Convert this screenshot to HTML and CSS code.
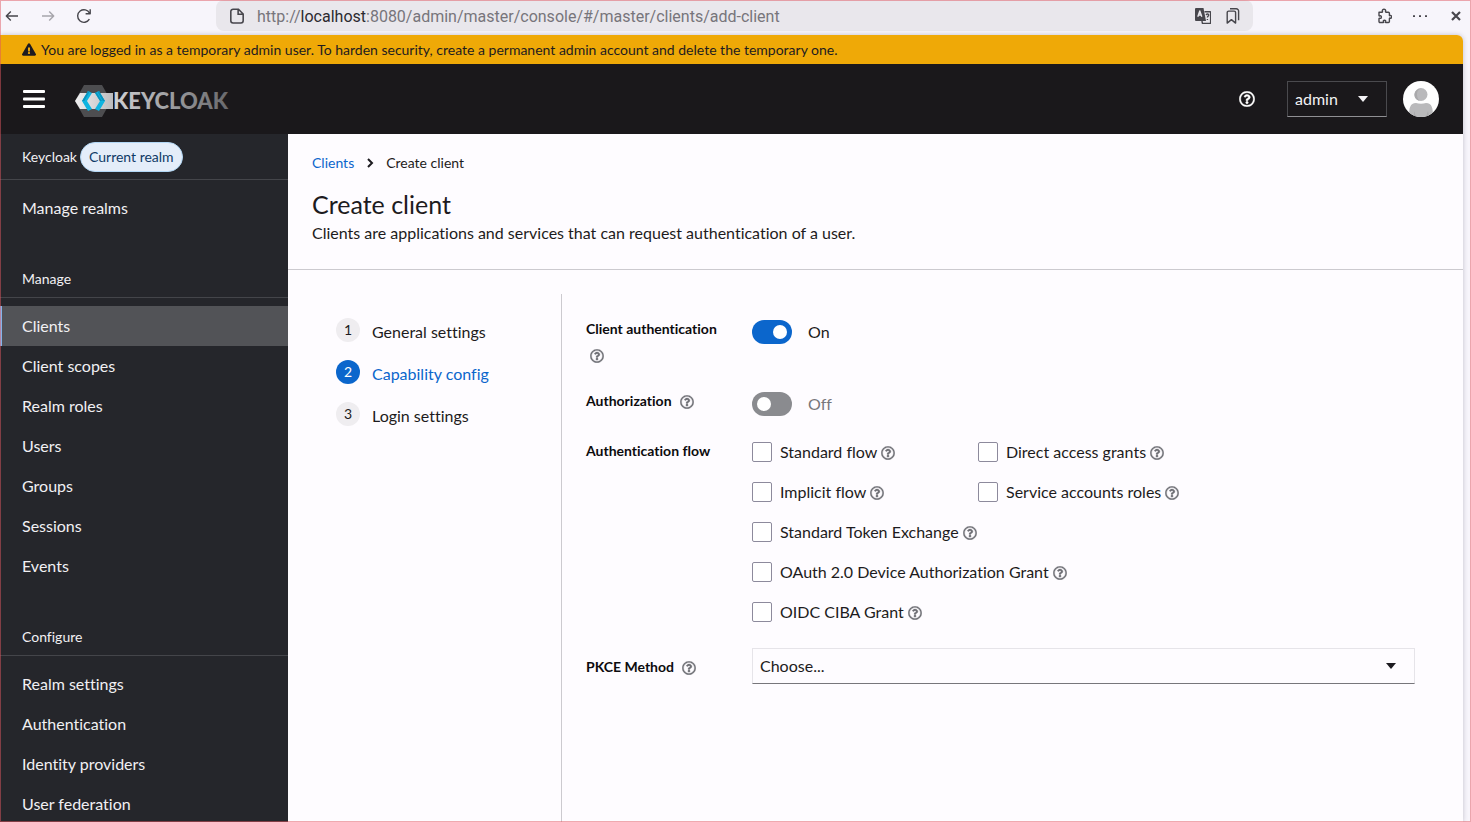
FILE: index.html
```html
<!DOCTYPE html>
<html lang="en">
<head>
<meta charset="utf-8">
<title>Create client - Keycloak Administration Console</title>
<link rel="stylesheet" href="styles.css">
</head>
<body>
<svg class="sprite" aria-hidden="true">
  <symbol id="help" viewBox="0 0 512 512"><path d="M256 8C119.043 8 8 119.083 8 256c0 136.997 111.043 248 248 248s248-111.003 248-248C504 119.083 392.957 8 256 8zm0 448c-110.532 0-200-89.431-200-200 0-110.495 89.472-200 200-200 110.491 0 200 89.471 200 200 0 110.53-89.431 200-200 200zm107.244-255.2c0 67.052-72.421 68.084-72.421 92.863V300c0 6.627-5.373 12-12 12h-45.647c-6.627 0-12-5.373-12-12v-8.659c0-35.745 27.1-50.034 47.579-61.516 17.561-9.845 28.324-16.541 28.324-29.579 0-17.246-21.999-28.693-39.784-28.693-23.189 0-33.894 10.977-48.942 29.969-4.057 5.12-11.46 6.071-16.666 2.124l-27.824-21.098c-5.107-3.872-6.251-11.066-2.644-16.363C184.846 131.491 214.94 112 261.794 112c49.071 0 101.45 38.304 101.45 88.8zM298 368c0 23.159-18.841 42-42 42s-42-18.841-42-42 18.841-42 42-42 42 18.841 42 42z"/></symbol>
</svg>

<div class="window">
  <div class="toolbar">
    <div class="history">
      <button class="tool" aria-label="Back"><svg viewBox="0 0 16 16"><path d="M14 8H2.500M6.800 3.500 2.300 8l4.500 4.500"/></svg></button>
      <button class="tool" aria-label="Forward" disabled><svg viewBox="0 0 16 16"><path d="M2 8h11.500M9.200 3.500l4.500 4.500-4.500 4.500"/></svg></button>
      <button class="tool" aria-label="Reload"><svg viewBox="0 0 16 16"><path d="M13.400 11.200A6.300 6.300 0 1 1 13.600 5.200M14.200 1.200v4.500H9.600"/></svg></button>
    </div>
    <div class="address">
      <svg class="address-icon" viewBox="0 0 16 16"><path d="M4.500 2h4.800l4.200 4.200v6a2 2 0 0 1-2 2h-7a2 2 0 0 1-2-2V4a2 2 0 0 1 2-2zM9 2.200v4.300h4.400"/></svg>
      <div class="url">http://<b>localhost</b>:8080/admin/master/console/#/master/clients/add-client</div>
      <button class="tool" aria-label="Translate page"><svg viewBox="0 0 16 16"><path class="solid" d="M1 0h7.500l2.500 13H1a1 1 0 0 1-1-1V1a1 1 0 0 1 1-1z"/><path class="cut" d="M2.800 8.800 4.800 3l2 5.800M3.500 7h2.600"/><path d="M9.500 3.700H15a.6.6 0 0 1 .6.6v10.600a.6.6 0 0 1-.6.6H7.500l-.6-2.500M11.200 7.200c.2-1.800 2.600-1.500 2.400 0-.1 1-1.200 1-1.200 2.200M12.400 11v1"/></svg></button>
      <button class="tool" aria-label="Bookmark this page"><svg viewBox="0 0 16 16"><path d="M2.200 4.500a1.400 1.400 0 0 1 1.400-1.400h5.600a1.400 1.400 0 0 1 1.400 1.400v10.600L6.400 11.600l-4.200 3.500zM5 .8h6.300a2.300 2.300 0 0 1 2.300 2.300v9.200"/></svg></button>
    </div>
    <div class="actions">
      <button class="tool" aria-label="Extensions"><svg viewBox="0 0 16 16"><path d="M3 4.200h3c.5 0 .6-.4.400-.9C5.700.5 10.300.5 9.600 3.300c-.2.5 0 .9.500.9h2.300a1 1 0 0 1 1 1v2c0 .5.4.6.7.3 1.900-.9 1.900 3.500 0 2.600-.3-.2-.7 0-.7.4v3a1 1 0 0 1-1 1H9.800c-.5 0-.5-.4-.3-.8.900-2-2.900-2-2-.1.200.500.200.9-.3.9H4a1 1 0 0 1-1-1v-2.800c0-.6.500-.6.900-.4 2 .8 2-3.200 0-2.400-.4.200-.9.100-.9-.4z"/></svg></button>
      <button class="tool" aria-label="Menu"><svg viewBox="0 0 16 16"><path class="solid" d="M1 7.300h2v1.800H1zM7 7.300h2v1.800H7zM13 7.300h2v1.800h-2z"/></svg></button>
      <button class="tool tool-close" aria-label="Close"><svg viewBox="0 0 16 16"><path d="m4 4 8 8M12 4l-8 8"/></svg></button>
    </div>
  </div>

  <div class="page">
    <div class="banner">
      <svg viewBox="0 0 576 512" aria-hidden="true"><path d="M569.517 440.013C587.975 472.007 564.806 512 527.94 512H48.054c-36.937 0-59.999-40.055-41.577-71.987L246.423 23.985c18.467-32.009 64.72-31.951 83.154 0l239.94 416.028zM288 354c-25.405 0-46 20.595-46 46s20.595 46 46 46 46-20.595 46-46-20.595-46-46-46zm-43.673-165.346l7.418 136c.347 6.364 5.609 11.346 11.982 11.346h48.546c6.373 0 11.635-4.982 11.982-11.346l7.418-136c.375-6.874-5.098-12.654-11.982-12.654h-63.383c-6.884 0-12.356 5.78-11.981 12.654z"/></svg>
      <span>You are logged in as a temporary admin user. To harden security, create a permanent admin account and delete the temporary one.</span>
    </div>

    <header class="masthead">
      <button class="burger" aria-label="Global navigation"><svg viewBox="0 0 22 20"><rect y="1" width="22" height="3" rx="1"/><rect y="8.500" width="22" height="3" rx="1"/><rect y="16" width="22" height="3" rx="1"/></svg></button>
      <a class="brand" href="#" aria-label="Keycloak">
        <svg viewBox="0 0 153 32">
          <defs>
            <linearGradient id="band" x1="0" x2="1"><stop offset="0" stop-color="#efeff0"/><stop offset="1" stop-color="#bcbcbe"/></linearGradient>
            <linearGradient id="word" gradientUnits="userSpaceOnUse" x1="38" x2="153" y1="0" y2="0"><stop offset="0" stop-color="#d2d2d4"/><stop offset="1" stop-color="#69696c"/></linearGradient>
          </defs>
          <path fill="#4d4d50" d="M9 0h18l9 16-9 16H9L0 16z"/>
          <path fill="url(#band)" d="M5 8h33v16H5L0 16z"/>
          <path fill="#0fb4e0" d="m13 6 4 2-5 8 5 8-4 2-6-10z"/>
          <path fill="#0a93bd" d="m13 6 1.500.7L9.300 16H7z"/>
          <path fill="#0fb4e0" d="m24 6 6 10-6 10-4-2 5-8-5-8z"/>
          <path fill="#0a93bd" d="m24 6 6 10h-2.200l-5.400-9.200zM25 16l-5-8 1.500-.700L27 16z"/>
          <text class="wordmark" x="38" y="24" fill="url(#word)">KEYCLOAK</text>
        </svg>
      </a>
      <div class="masthead-tools">
        <button class="help-button" aria-label="Help"><svg><use href="#help"/></svg></button>
        <button class="user-menu">admin <span class="caret"></span></button>
        <svg class="avatar" viewBox="0 0 36 36" role="img" aria-label="Avatar">
          <clipPath id="round"><circle cx="18" cy="18" r="18"/></clipPath>
          <g clip-path="url(#round)">
            <path fill="#fefefe" d="M0 0h36v36H0z"/>
            <circle cx="18" cy="13.500" r="6.500" fill="#b9b9bb"/>
            <path fill="#a9a9ab" d="M18 7.500c-3 1-4 3-4 6s1 5 3 6.300c-8-1-7-12 1-12.300z"/>
            <path fill="#b9b9bb" d="M6 36c0-9 1-14 7-14 3 1 7 1 10 0 6 0 7 5 7 14z"/>
            <path fill="#a9a9ab" d="M11 30l2 6h-2zM25 30l-2 6h3z"/>
          </g>
        </svg>
      </div>
    </header>

    <div class="shell">
      <nav class="sidebar" aria-label="Global">
        <div class="realm"><span>Keycloak</span><span class="realm-badge">Current realm</span></div>
        <ul><li><a href="#">Manage realms</a></li></ul>
        <h2>Manage</h2>
        <ul>
          <li><a class="current" href="#" aria-current="page">Clients</a></li>
          <li><a href="#">Client scopes</a></li>
          <li><a href="#">Realm roles</a></li>
          <li><a href="#">Users</a></li>
          <li><a href="#">Groups</a></li>
          <li><a href="#">Sessions</a></li>
          <li><a href="#">Events</a></li>
        </ul>
        <h2>Configure</h2>
        <ul>
          <li><a href="#">Realm settings</a></li>
          <li><a href="#">Authentication</a></li>
          <li><a href="#">Identity providers</a></li>
          <li><a href="#">User federation</a></li>
        </ul>
      </nav>

      <main class="main">
        <div class="intro">
          <nav class="crumbs" aria-label="Breadcrumb">
            <a href="#">Clients</a>
            <svg viewBox="0 0 8 10" aria-hidden="true"><path d="m2 1 4 4-4 4"/></svg>
            <span>Create client</span>
          </nav>
          <h1>Create client</h1>
          <p>Clients are applications and services that can request authentication of a user.</p>
        </div>

        <div class="wizard">
          <ol class="steps">
            <li><a href="#"><span class="num">1</span><span class="step-name">General settings</span></a></li>
            <li><a class="active" href="#" aria-current="step"><span class="num">2</span><span class="step-name">Capability config</span></a></li>
            <li><a href="#"><span class="num">3</span><span class="step-name">Login settings</span></a></li>
          </ol>

          <form class="form">
            <div class="row">
              <div class="label"><label for="client-auth">Client authentication</label> <button type="button" class="help" aria-label="Help for client authentication"><svg><use href="#help"/></svg></button></div>
              <div class="toggle"><input type="checkbox" role="switch" id="client-auth" checked><label for="client-auth">On</label></div>
            </div>
            <div class="row">
              <div class="label"><label for="authorization">Authorization</label> <button type="button" class="help" aria-label="Help for authorization"><svg><use href="#help"/></svg></button></div>
              <div class="toggle off"><input type="checkbox" role="switch" id="authorization"><label for="authorization">Off</label></div>
            </div>
            <div class="row" role="group" aria-labelledby="flow-label">
              <div class="label" id="flow-label">Authentication flow</div>
              <div class="flows">
                <div class="check"><input type="checkbox" id="standard"><label for="standard">Standard flow</label><button type="button" class="help" aria-label="Help for standard flow"><svg><use href="#help"/></svg></button></div>
                <div class="check"><input type="checkbox" id="direct"><label for="direct">Direct access grants</label><button type="button" class="help" aria-label="Help for direct access grants"><svg><use href="#help"/></svg></button></div>
                <div class="check"><input type="checkbox" id="implicit"><label for="implicit">Implicit flow</label><button type="button" class="help" aria-label="Help for implicit flow"><svg><use href="#help"/></svg></button></div>
                <div class="check"><input type="checkbox" id="service"><label for="service">Service accounts roles</label><button type="button" class="help" aria-label="Help for service accounts roles"><svg><use href="#help"/></svg></button></div>
                <div class="check wide"><input type="checkbox" id="exchange"><label for="exchange">Standard Token Exchange</label><button type="button" class="help" aria-label="Help for standard token exchange"><svg><use href="#help"/></svg></button></div>
                <div class="check wide"><input type="checkbox" id="device"><label for="device">OAuth 2.0 Device Authorization Grant</label><button type="button" class="help" aria-label="Help for device authorization grant"><svg><use href="#help"/></svg></button></div>
                <div class="check wide"><input type="checkbox" id="ciba"><label for="ciba">OIDC CIBA Grant</label><button type="button" class="help" aria-label="Help for OIDC CIBA grant"><svg><use href="#help"/></svg></button></div>
              </div>
            </div>
            <div class="row row-select">
              <div class="label"><label for="pkce">PKCE Method</label> <button type="button" class="help" aria-label="Help for PKCE method"><svg><use href="#help"/></svg></button></div>
              <div class="select"><select id="pkce"><option>Choose...</option><option>S256</option><option>plain</option></select><span class="caret"></span></div>
            </div>
          </form>
        </div>
      </main>
    </div>
  </div>
</div>
</body>
</html>
```
FILE: styles.css
```css
* { box-sizing: border-box; }

body {
  margin: 0;
  font-family: Lato, "Noto Sans", sans-serif;
  font-size: 16px;
  font-variant-ligatures: none;
  line-height: 24px;
  color: #1d1b20;
}

button, select, input { font: inherit; color: inherit; margin: 0; }
button { padding: 0; border: 0; background: none; }
ul, ol { list-style: none; margin: 0; padding: 0; }
a { color: inherit; text-decoration: none; }
svg { display: block; }
.sprite { position: absolute; width: 0; height: 0; }

.window {
  position: relative;
  display: flex;
  flex-direction: column;
  height: 100vh;
  overflow: hidden;
  background: #f7f5fb;
}
.window::after {
  content: "";
  position: absolute;
  inset: 0;
  border: 1px solid rgba(224, 85, 96, 0.5);
  pointer-events: none;
}

/* Browser toolbar */
.toolbar {
  display: flex;
  align-items: center;
  height: 35px;
  flex: none;
  padding: 0 7px 4px 4px;
}
.history { display: flex; gap: 20px; flex: none; width: 212px; }
.tool svg {
  width: 16px;
  height: 16px;
  fill: none;
  stroke: #47464c;
  stroke-width: 1.4;
  stroke-linejoin: round;
}
.tool:disabled { opacity: 0.45; }
.tool .solid { fill: #47464c; stroke: none; }
.tool .cut { stroke: #e9e7ec; }
.tool-close svg { stroke-width: 2.2; }
.address {
  display: flex;
  align-items: center;
  gap: 14px;
  height: 31px;
  flex: 1;
  min-width: 0;
  margin-right: 123px;
  padding: 0 12px;
  border-radius: 8px;
  background: #e9e7ec;
}
.address-icon { width: 18px; height: 18px; margin-right: -3px; fill: none; stroke: #47464c; stroke-width: 1.4; }
.url { flex: 1; padding-top: 2px; font-family: Roboto, sans-serif; color: #77757b; }
.url b { font-weight: 400; color: #2c2a30; }
.actions { display: flex; gap: 20px; }

/* Page viewport */
.page {
  flex: 1;
  min-height: 0;
  display: flex;
  flex-direction: column;
  margin-right: 8px;
  overflow: hidden;
  border-top-right-radius: 6px;
  background: #fefcff;
  box-shadow: 0 0 5px rgba(40, 36, 60, 0.25);
}
.banner {
  display: flex;
  align-items: center;
  gap: 5px;
  height: 29px;
  flex: none;
  padding: 0 22px;
  background: #efa907;
  font-size: 14px;
  line-height: 21px;
}
.banner svg { width: 14px; height: 13px; fill: #1d1b20; }

.masthead {
  display: flex;
  align-items: center;
  height: 70px;
  flex: none;
  padding: 0 24px 0 23px;
  background: #1a181b;
  color: #f3f2f5;
}
.burger svg { width: 22px; height: 20px; fill: #fff; }
.brand { margin-left: 30px; padding-top: 3px; }
.brand svg { width: 153px; height: 32px; overflow: visible; }
.wordmark { font: 900 22px Lato, sans-serif; }
.masthead-tools { display: flex; align-items: center; margin-left: auto; }
.help-button svg { width: 16px; height: 16px; fill: #fff; stroke: #fff; stroke-width: 12; }
.user-menu {
  display: flex;
  align-items: center;
  justify-content: space-between;
  width: 100px;
  height: 36px;
  margin: 0 16px 0 32px;
  padding: 0 18px 0 7px;
  border: 1px solid #4a4a4e;
  border-bottom-color: #8f8f93;
}
.caret {
  border: 5px solid transparent;
  border-top: 6px solid currentColor;
  border-bottom: 0;
}
.avatar { width: 36px; height: 36px; }

.shell { display: flex; flex: 1; min-height: 0; }

/* Sidebar */
.sidebar {
  width: 288px;
  flex: none;
  overflow: hidden;
  background: #25262b;
  color: #f1f0f3;
}
.realm {
  display: flex;
  align-items: center;
  gap: 3px;
  height: 46px;
  padding: 0 22px;
  border-bottom: 1px solid #44454a;
  font-size: 14px;
}
.realm-badge {
  padding: 2px 8px;
  border: 1px solid #b2d7f5;
  border-radius: 15px;
  background: #e4edf9;
  color: #0f3a66;
}
.sidebar ul { padding-top: 8px; }
.sidebar a { display: block; padding: 8px 22px; }
.sidebar .current { background: #525357; box-shadow: inset 2px 0 #85b4ea; }
.sidebar h2 {
  margin: 0;
  padding: 40px 22px 8px;
  border-bottom: 1px solid #44454a;
  font-size: 14px;
  font-weight: 400;
  line-height: 21px;
}

/* Main */
.main { flex: 1; min-width: 0; display: flex; flex-direction: column; }
.intro { padding: 18px 24px 24px; border-bottom: 1px solid #cccacf; }
.crumbs { display: flex; align-items: center; gap: 12px; font-size: 14px; line-height: 21px; }
.crumbs a { color: #0b66cc; }
.crumbs svg { width: 8px; height: 10px; fill: none; stroke: currentColor; stroke-width: 2; }
h1 { margin: 15px 0 1px; font-size: 25px; font-weight: 400; line-height: 32px; }
.intro p { margin: 0; }

.wizard { flex: 1; display: flex; padding-top: 24px; }
.steps {
  width: 274px;
  flex: none;
  padding: 24px;
  border-right: 1px solid #cccacf;
}
.steps li + li { margin-top: 16px; }
.steps a { display: flex; align-items: flex-start; gap: 12px; padding-left: 24px; }
.step-name { padding-top: 2px; }
.num {
  width: 24px;
  height: 24px;
  border-radius: 50%;
  background: #efedf0;
  font-size: 14px;
  text-align: center;
}
.steps .active { color: #0b66cc; }
.active .num { background: #0b66cc; color: #fff; }

.form { flex: 1; min-width: 0; padding: 24px 48px 24px 24px; }
.row { display: grid; grid-template-columns: 150px 1fr; column-gap: 16px; margin-bottom: 24px; }
.label {
  display: flex;
  flex-wrap: wrap;
  align-content: flex-start;
  align-items: center;
  gap: 4px;
  font-size: 14px;
  font-weight: 700;
  line-height: 22px;
  color: #0c0b0e;
}
.help { display: flex; align-items: center; height: 22px; margin-left: 4px; padding-top: 2px; }
.help svg { width: 14px; height: 14px; fill: #6e6f75; stroke: #6e6f75; stroke-width: 12; }
.toggle { display: flex; align-items: flex-start; gap: 16px; padding-top: 2px; }
.toggle input {
  appearance: none;
  width: 40px;
  height: 24px;
  padding: 5px;
  border-radius: 12px;
  background: #0b66cc;
}
.toggle input::before {
  content: "";
  display: block;
  width: 14px;
  height: 14px;
  border-radius: 50%;
  background: #fff;
}
.toggle input:checked::before { margin-left: 16px; }
.off { color: #77767b; }
.off input { background: #8a8b8f; }

.flows {
  display: grid;
  grid-template-columns: 210px 1fr;
  gap: 16px;
}
.check { display: flex; align-items: center; height: 24px; }
.wide { grid-column: 1 / -1; }
.check input {
  appearance: none;
  width: 20px;
  height: 20px;
  margin-right: 8px;
  border: 1px solid #8d8a9c;
  border-radius: 2px;
  background: #fff;
}
.select { position: relative; display: grid; }
.select select {
  appearance: none;
  height: 36px;
  padding: 0 7px;
  border: 1px solid #e6e4e9;
  border-bottom-color: #77767b;
  border-radius: 0;
  background: transparent;
}
.select .caret { position: absolute; right: 19px; top: 15px; pointer-events: none; }
.row-select .label { padding-top: 8px; }
```
